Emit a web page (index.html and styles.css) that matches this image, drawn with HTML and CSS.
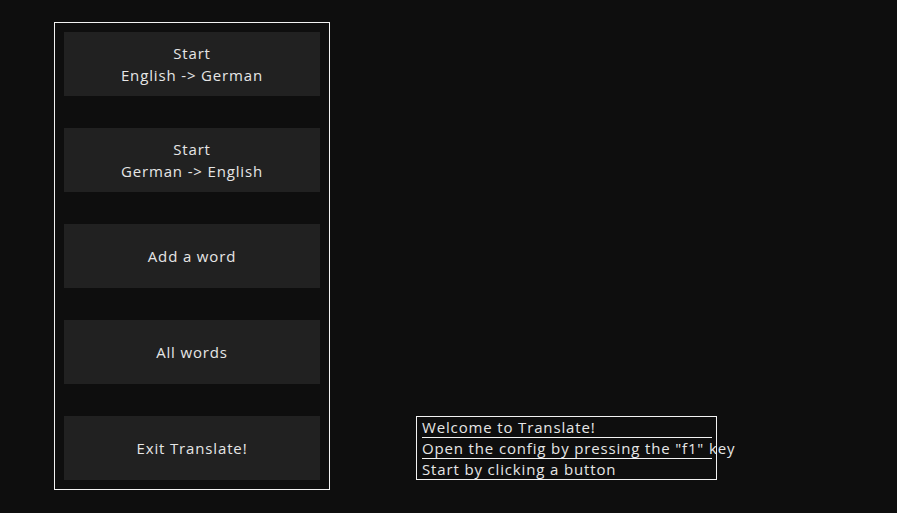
FILE: index.html
```html
<!DOCTYPE html>
<html lang="en">
<head>
<meta charset="utf-8">
<title>Translate</title>
<link rel="stylesheet" href="styles.css">
</head>
<body>
<div class="screen">
  <nav class="menu">
    <button class="menu-btn">Start<br>English -&gt; German</button>
    <button class="menu-btn">Start<br>German -&gt; English</button>
    <button class="menu-btn">Add a word</button>
    <button class="menu-btn">All words</button>
    <button class="menu-btn">Exit Translate!</button>
  </nav>
  <div class="info">
    <div class="info-line">Welcome to Translate!</div>
    <div class="info-line">Open the config by pressing the "f1" key</div>
    <div class="info-line">Start by clicking a button</div>
  </div>
</div>
</body>
</html>
```
FILE: styles.css
```css
html, body {
  margin: 0;
  padding: 0;
  background: #0e0e0e;
  height: 100%;
}
body {
  font-family: "Open Sans", "DejaVu Sans", sans-serif;
  color: #e6e6e6;
}
.screen {
  display: flex;
  align-items: flex-end;
  padding: 22px 0 0 54px;
}
.menu {
  width: 256px;
  border: 1px solid #f2f2f2;
  padding: 9px;
  display: flex;
  flex-direction: column;
  gap: 32px;
}
.menu-btn {
  height: 64px;
  border: none;
  background: #212121;
  color: #e6e6e6;
  font-family: inherit;
  font-size: 15px;
  letter-spacing: 0.85px;
  line-height: 22px;
  padding: 0;
  cursor: pointer;
}
.info {
  box-sizing: border-box;
  width: 301px;
  margin-left: 86px;
  margin-bottom: 10px;
  border: 1px solid #f2f2f2;
  padding: 0 4px 0 5px;
  font-size: 15px;
  letter-spacing: 0.85px;
  line-height: 20px;
}
.info-line {
  white-space: nowrap;
  height: 20px;
}
.info-line + .info-line {
  border-top: 1px solid #f2f2f2;
}
```
